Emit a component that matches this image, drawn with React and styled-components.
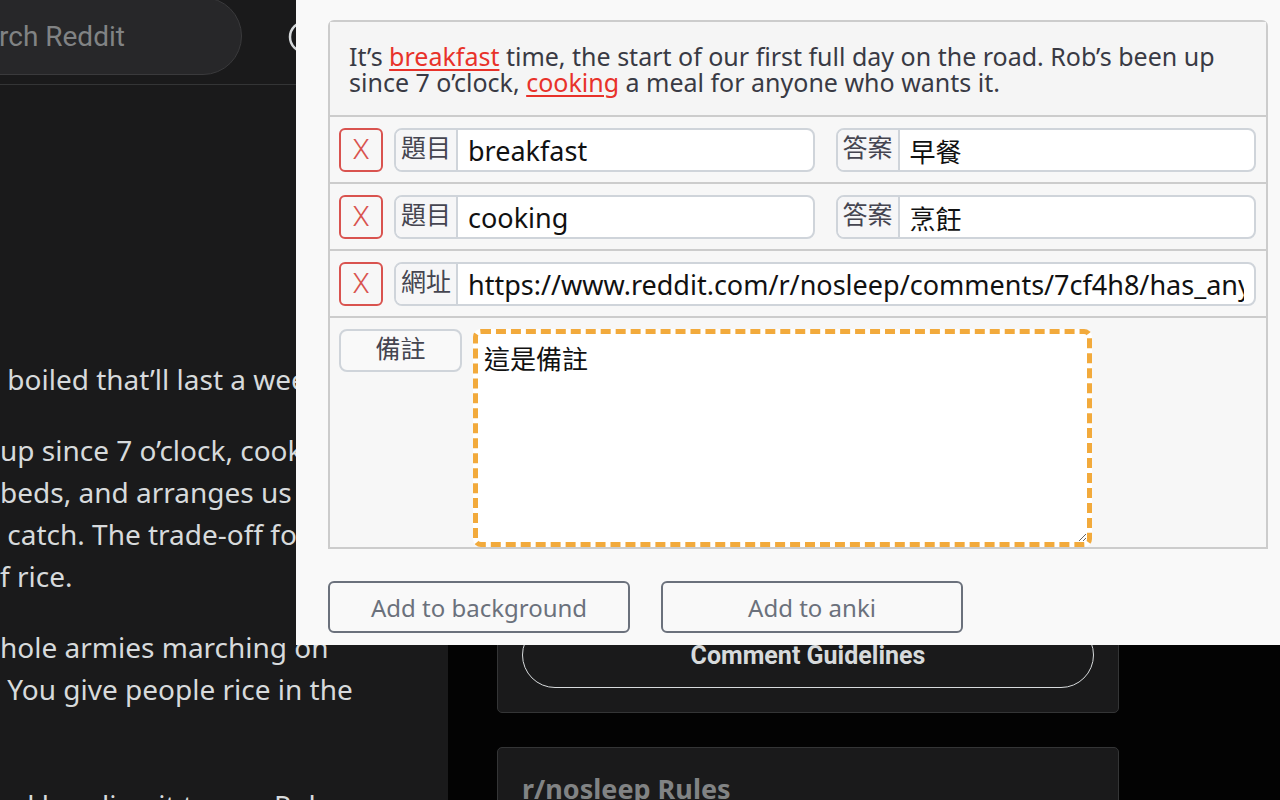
import React from 'react';
import styled, { createGlobalStyle } from 'styled-components';

const GlobalStyle = createGlobalStyle`
  html, body {
    margin: 0;
    padding: 0;
    background: #030303;
  }
  body {
    width: 1280px;
    height: 800px;
    overflow: hidden;
    font-family: "Noto Sans", sans-serif;
  }
  * {
    box-sizing: border-box;
  }
`;

const UI_FONT = `"Noto Sans", "Noto Sans CJK TC", sans-serif`;
const CJK_FONT = `"Noto Sans CJK TC", "Noto Sans", sans-serif`;

/* ---- reddit page behind the popup ---- */

const Page = styled.div`
  width: 1280px;
  height: 800px;
  overflow: hidden;
  display: flex;
  flex-direction: column;
`;

const TopBar = styled.header`
  height: 85px;
  flex-shrink: 0;
  display: flex;
  align-items: flex-start;
  background: #1a1a1b;
  border-bottom: 1px solid #343536;
`;

const SearchPill = styled.div`
  width: 400px;
  height: 78px;
  margin: -3px 0 0 -158px;
  padding-left: 156px;
  display: flex;
  align-items: center;
  background: #272729;
  border: 1px solid #3a3a3c;
  border-radius: 39px;
`;

const SearchText = styled.span`
  font-family: Roboto, sans-serif;
  font-size: 28px;
  line-height: 34px;
  padding-top: 2px;
  color: #818384;
`;

const UserIcon = styled.svg`
  margin: 20px 0 0 46px;
  flex-shrink: 0;
`;

const Body = styled.div`
  flex: 1;
  display: flex;
`;

const Article = styled.article`
  width: 448px;
  flex-shrink: 0;
  overflow: hidden;
  background: #1a1a1b;
  padding-top: 273px;
`;

const Para = styled.p`
  margin: 0 0 ${(p) => (p.$wide ? 32 : 29)}px;
  font-size: 28px;
  line-height: 42px;
  color: #d7dadc;
`;

const Line = styled.span`
  display: block;
  height: 42px;
  white-space: pre;
`;

const Sidebar = styled.aside`
  flex: 1;
  padding: 100px 161px 0 49px;
  display: flex;
  flex-direction: column;
  gap: 34px;
`;

const SideCard = styled.section`
  height: ${(p) => p.$height}px;
  flex-shrink: 0;
  display: flex;
  flex-direction: column;
  justify-content: ${(p) => (p.$bottom ? 'flex-end' : 'flex-start')};
  padding: 24px;
  background: #1a1a1b;
  border: 1px solid #343536;
  border-radius: 5px;
`;

const GuidelinesButton = styled.div`
  height: 66px;
  display: flex;
  align-items: center;
  justify-content: center;
  border: 1.5px solid #d7dadc;
  border-radius: 33px;
  font-family: Roboto, sans-serif;
  font-weight: 700;
  font-size: 25px;
  color: #d7dadc;
`;

const SideTitle = styled.h3`
  margin: 1px 0 0;
  font-family: "Noto Sans", sans-serif;
  font-weight: 700;
  font-size: 27px;
  line-height: 32px;
  color: #818384;
`;

/* ---- anki popup ---- */

const Popup = styled.div`
  position: fixed;
  top: 0;
  left: 296px;
  width: 984px;
  padding: 20px 12px 12px 32px;
  background: #f9f9f9;
  font-family: ${UI_FONT};
`;

const Card = styled.div`
  border: 2px solid #cccccc;
  border-radius: 6px 6px 0 0;
  background: #f7f7f7;
`;

const Sentence = styled.div`
  padding: 21px 19px 20px;
  background: #f5f5f5;
  font-size: 25px;
  line-height: 26px;
  color: #393a44;
`;

const Mark = styled.span`
  color: #e8322a;
  text-decoration: underline;
  text-underline-offset: 3px;
`;

const Row = styled.div`
  display: flex;
  align-items: center;
  gap: 11px;
  padding: 11px 10px 10px 9px;
  border-top: 2px solid #cccccc;
`;

const RemoveButton = styled.button`
  width: 44px;
  height: 44px;
  flex-shrink: 0;
  padding: 0;
  background: transparent;
  border: 2px solid #d9534f;
  border-radius: 6px;
  font-family: Roboto, sans-serif;
  font-weight: 300;
  font-size: 28px;
  line-height: 1;
  color: #d9534f;
`;

const Fields = styled.div`
  flex: 1;
  display: flex;
  gap: 21px;
  min-width: 0;
`;

const Group = styled.label`
  flex: 1;
  min-width: 0;
  height: 44px;
  display: flex;
  background: #ffffff;
  border: 2px solid #cfd4da;
  border-radius: 8px;
  overflow: hidden;
`;

const GroupLabel = styled.span`
  flex-shrink: 0;
  padding: 1px 5px 0 5px;
  background: #f6f6f7;
  border-right: 2px solid #cfd4da;
  font-family: ${CJK_FONT};
  font-size: 25px;
  line-height: 30px;
  color: #454550;
`;

const GroupInput = styled.input`
  flex: 1;
  min-width: 0;
  padding: 0 10px;
  border: none;
  outline: none;
  background: transparent;
  font-family: ${(p) => (p.$cjk ? CJK_FONT : UI_FONT)};
  font-size: ${(p) => (p.$cjk ? 26 : 27)}px;
  color: #111111;
`;

const NoteRow = styled.div`
  display: flex;
  align-items: flex-start;
  gap: 11px;
  padding: 11px 10px 0 9px;
  border-top: 2px solid #cccccc;
`;

const NoteLabel = styled.button`
  width: 123px;
  height: 43px;
  flex-shrink: 0;
  padding: 1px 0 0;
  display: flex;
  justify-content: center;
  align-items: flex-start;
  background: #f9f9f9;
  border: 2px solid #cfd4da;
  border-radius: 8px;
  font-family: ${CJK_FONT};
  font-size: 25px;
  line-height: 30px;
  color: #454550;
`;

const NoteArea = styled.textarea`
  width: 619px;
  height: 218px;
  padding: 9px 6px;
  background: #ffffff;
  border: 5px dashed #f2aa3c;
  border-radius: 8px;
  outline: none;
  resize: both;
  font-family: ${CJK_FONT};
  font-size: 26px;
  line-height: 30px;
  color: #111111;
`;

const Actions = styled.div`
  display: flex;
  gap: 31px;
  margin-top: 32px;
`;

const ActionButton = styled.button`
  width: 302px;
  height: 52px;
  background: transparent;
  border: 2px solid #6b717c;
  border-radius: 6px;
  font-family: ${UI_FONT};
  font-size: 24px;
  color: #6b717c;
`;

const entries = [
  { q: 'breakfast', a: '早餐' },
  { q: 'cooking', a: '烹飪' },
];

const paragraphs = [
  [' boiled that’ll last a week.'],
  [
    'up since 7 o’clock, cooking a meal for',
    'beds, and arranges us in the car',
    ' catch. The trade-off for the',
    'f rice.',
  ],
  ['hole armies marching on', ' You give people rice in the', ''],
  ['nd handing it to me. Rob'],
];

export default function App() {
  return (
    <>
      <GlobalStyle />
      <Page>
        <TopBar>
          <SearchPill>
            <SearchText>rch Reddit</SearchText>
          </SearchPill>
          <UserIcon width="34" height="34" viewBox="0 0 34 34">
            <circle cx="17" cy="17" r="15" fill="none" stroke="#d7dadc" strokeWidth="2.5" />
          </UserIcon>
        </TopBar>
        <Body>
          <Article>
            {paragraphs.map((lines, i) => (
              <Para key={i} $wide={i === 2}>
                {lines.map((l, j) => (
                  <Line key={j}>{l}</Line>
                ))}
              </Para>
            ))}
          </Article>
          <Sidebar>
            <SideCard $height={528} $bottom>
              <GuidelinesButton>Comment Guidelines</GuidelinesButton>
            </SideCard>
            <SideCard $height={200}>
              <SideTitle>r/nosleep Rules</SideTitle>
            </SideCard>
          </Sidebar>
        </Body>
      </Page>

      <Popup>
        <Card>
          <Sentence>
            It’s <Mark>breakfast</Mark> time, the start of our first full day on the road. Rob’s been up
            since 7 o’clock, <Mark>cooking</Mark> a meal for anyone who wants it.
          </Sentence>
          {entries.map((e) => (
            <Row key={e.q}>
              <RemoveButton>X</RemoveButton>
              <Fields>
                <Group>
                  <GroupLabel>題目</GroupLabel>
                  <GroupInput readOnly value={e.q} />
                </Group>
                <Group>
                  <GroupLabel>答案</GroupLabel>
                  <GroupInput readOnly value={e.a} $cjk />
                </Group>
              </Fields>
            </Row>
          ))}
          <Row>
            <RemoveButton>X</RemoveButton>
            <Fields>
              <Group>
                <GroupLabel>網址</GroupLabel>
                <GroupInput
                  readOnly
                  value="https://www.reddit.com/r/nosleep/comments/7cf4h8/has_anyone_else_heard_of_the_rice_man/"
                />
              </Group>
            </Fields>
          </Row>
          <NoteRow>
            <NoteLabel>備註</NoteLabel>
            <NoteArea readOnly value="這是備註" />
          </NoteRow>
        </Card>
        <Actions>
          <ActionButton>Add to background</ActionButton>
          <ActionButton>Add to anki</ActionButton>
        </Actions>
      </Popup>
    </>
  );
}
